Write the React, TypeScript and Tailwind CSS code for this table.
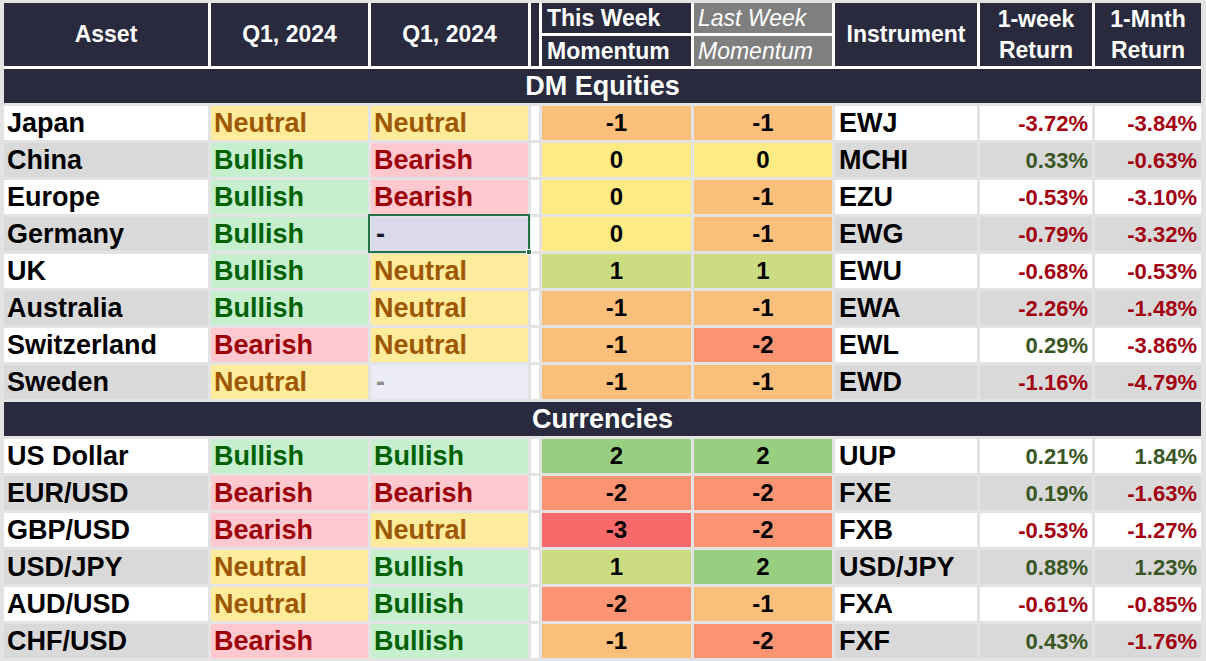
import React from "react";

type Row = {
  name: string;
  q1a: string;
  q1b: string;
  tw: number;
  lw: number;
  inst: string;
  wk: string;
  mn: string;
};

const dm: Row[] = [
  { name: "Japan", q1a: "Neutral", q1b: "Neutral", tw: -1, lw: -1, inst: "EWJ", wk: "-3.72%", mn: "-3.84%" },
  { name: "China", q1a: "Bullish", q1b: "Bearish", tw: 0, lw: 0, inst: "MCHI", wk: "0.33%", mn: "-0.63%" },
  { name: "Europe", q1a: "Bullish", q1b: "Bearish", tw: 0, lw: -1, inst: "EZU", wk: "-0.53%", mn: "-3.10%" },
  { name: "Germany", q1a: "Bullish", q1b: "sel", tw: 0, lw: -1, inst: "EWG", wk: "-0.79%", mn: "-3.32%" },
  { name: "UK", q1a: "Bullish", q1b: "Neutral", tw: 1, lw: 1, inst: "EWU", wk: "-0.68%", mn: "-0.53%" },
  { name: "Australia", q1a: "Bullish", q1b: "Neutral", tw: -1, lw: -1, inst: "EWA", wk: "-2.26%", mn: "-1.48%" },
  { name: "Switzerland", q1a: "Bearish", q1b: "Neutral", tw: -1, lw: -2, inst: "EWL", wk: "0.29%", mn: "-3.86%" },
  { name: "Sweden", q1a: "Neutral", q1b: "dash", tw: -1, lw: -1, inst: "EWD", wk: "-1.16%", mn: "-4.79%" },
];

const fx: Row[] = [
  { name: "US Dollar", q1a: "Bullish", q1b: "Bullish", tw: 2, lw: 2, inst: "UUP", wk: "0.21%", mn: "1.84%" },
  { name: "EUR/USD", q1a: "Bearish", q1b: "Bearish", tw: -2, lw: -2, inst: "FXE", wk: "0.19%", mn: "-1.63%" },
  { name: "GBP/USD", q1a: "Bearish", q1b: "Neutral", tw: -3, lw: -2, inst: "FXB", wk: "-0.53%", mn: "-1.27%" },
  { name: "USD/JPY", q1a: "Neutral", q1b: "Bullish", tw: 1, lw: 2, inst: "USD/JPY", wk: "0.88%", mn: "1.23%" },
  { name: "AUD/USD", q1a: "Neutral", q1b: "Bullish", tw: -2, lw: -1, inst: "FXA", wk: "-0.61%", mn: "-0.85%" },
  { name: "CHF/USD", q1a: "Bearish", q1b: "Bullish", tw: -1, lw: -2, inst: "FXF", wk: "0.43%", mn: "-1.76%" },
];

const COLS = "grid grid-cols-[204px_157px_157px_8px_149px_138px_142px_112px_106px] gap-x-[3px]";

// colour scale used by the momentum columns
const momBg: Record<number, string> = {
  [-3]: "bg-[#f8696b]",
  [-2]: "bg-[#fa9473]",
  [-1]: "bg-[#fbbf7c]",
  0: "bg-[#ffeb84]",
  1: "bg-[#cbdc81]",
  2: "bg-[#98ce7f]",
};

const sentiment: Record<string, string> = {
  Neutral: "bg-[#ffeb9c] text-[#9c5700]",
  Bullish: "bg-[#c6efce] text-[#006100]",
  Bearish: "bg-[#ffc7ce] text-[#9c0006]",
};

function Sentiment({ v }: { v: string }) {
  if (v === "sel") {
    return (
      <div className="relative flex items-center bg-[#dadaea] pl-[5px] text-[27px] font-bold text-[#1a1a2a]">
        -
        <div className="pointer-events-none absolute -left-[3px] -top-[3px] -right-[2px] -bottom-[2px] border-2 border-[#217346]" />
        <div className="absolute -bottom-[4px] -right-[4px] h-[6px] w-[6px] border border-white bg-[#217346]" />
      </div>
    );
  }
  if (v === "dash") {
    return (
      <div className="flex items-center bg-[#ececf6] pl-[5px] text-[27px] font-bold text-[#8a8a8a]">-</div>
    );
  }
  return (
    <div className={`flex items-center pl-[3px] text-[27px] font-bold ${sentiment[v]}`}>{v}</div>
  );
}

function Pct({ v, bg }: { v: string; bg: string }) {
  const neg = v.startsWith("-");
  return (
    <div
      className={`flex items-center justify-end pr-[4px] text-[22px] font-bold ${bg} ${
        neg ? "text-[#a20010]" : "text-[#3a5624]"
      }`}
    >
      {v}
    </div>
  );
}

function DataRows({ rows }: { rows: Row[] }) {
  return (
    <div className={`${COLS} gap-y-[3px] auto-rows-[34px]`}>
      {rows.map((r, i) => {
        const bg = i % 2 === 0 ? "bg-white" : "bg-[#d9d9d9]";
        return (
          <React.Fragment key={r.name}>
            <div className={`flex items-center pl-[3px] text-[27px] font-bold text-black ${bg}`}>{r.name}</div>
            <Sentiment v={r.q1a} />
            <Sentiment v={r.q1b} />
            <div className="bg-white" />
            <div className={`flex items-center justify-center text-[24px] font-bold text-black ${momBg[r.tw]}`}>
              {r.tw}
            </div>
            <div className={`flex items-center justify-center text-[24px] font-bold text-black ${momBg[r.lw]}`}>
              {r.lw}
            </div>
            <div className={`flex items-center pl-[4px] text-[27px] font-bold text-black ${bg}`}>{r.inst}</div>
            <Pct v={r.wk} bg={bg} />
            <Pct v={r.mn} bg={bg} />
          </React.Fragment>
        );
      })}
    </div>
  );
}

function Band({ label }: { label: string }) {
  return (
    <div className="flex h-[34px] w-[1197px] items-center justify-center bg-[#292a3d] text-[27px] font-bold text-white">
      {label}
    </div>
  );
}

export default function App() {
  const head = "flex items-center justify-center bg-[#292a3d] text-[23px] font-bold text-white";
  return (
    <div className="h-[661px] w-[1206px] overflow-hidden bg-[#e3e3e3] pl-[4px] pt-[3px] font-['Liberation_Sans',Arial,sans-serif]">
      {/* header block, white grid lines */}
      <div className={`${COLS} w-[1197px] grid-rows-[30px_30px] gap-y-[3px] bg-white pb-[3px]`}>
        <div className={`${head} row-span-2`}>Asset</div>
        <div className={`${head} row-span-2`}>Q1, 2024</div>
        <div className={`${head} row-span-2`}>Q1, 2024</div>
        <div className="row-span-2 bg-[#292a3d]" />
        <div className="flex items-center bg-[#292a3d] pl-[5px] text-[23px] font-bold text-white">This Week</div>
        <div className="flex items-center bg-[#7f7f7f] pl-[4px] text-[23px] italic text-white">Last Week</div>
        <div className={`${head} row-span-2`}>Instrument</div>
        <div className={`${head} row-span-2 flex-col leading-[31px]`}>
          <span>1-week</span>
          <span>Return</span>
        </div>
        <div className={`${head} row-span-2 flex-col leading-[31px]`}>
          <span>1-Mnth</span>
          <span>Return</span>
        </div>
        <div className="flex items-center bg-[#292a3d] pl-[5px] text-[23px] font-bold text-white">Momentum</div>
        <div className="flex items-center bg-[#7f7f7f] pl-[4px] text-[23px] italic text-white">Momentum</div>
      </div>

      <Band label="DM Equities" />
      <div className="mt-[3px]">
        <DataRows rows={dm} />
      </div>
      <div className="mt-[3px]">
        <Band label="Currencies" />
      </div>
      <div className="mt-[3px]">
        <DataRows rows={fx} />
      </div>
    </div>
  );
}
